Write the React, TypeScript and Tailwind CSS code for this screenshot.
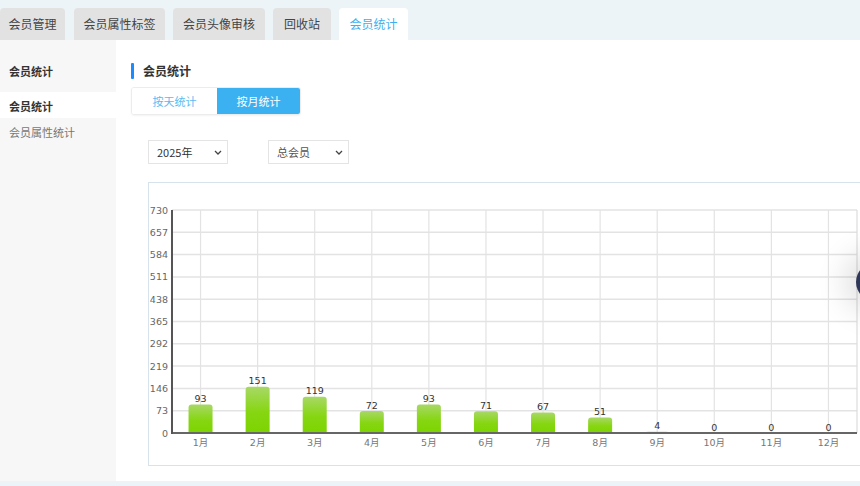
import React from 'react';

const tabs = [
  { title: '会员管理', w: 'w-[65px]' },
  { title: '会员属性标签', w: 'w-[91px]' },
  { title: '会员头像审核', w: 'w-[92px]' },
  { title: '回收站', w: 'w-[58px]' },
];

const months = [93, 151, 119, 72, 93, 71, 67, 51, 4, 0, 0, 0];

const X0 = 172;
const X1 = 857;
const Y0 = 433;
const YT = 210;
const MAX = 730;

const BarChart: React.FC = () => {
  const step = (X1 - X0) / 12;
  const unit = (Y0 - YT) / 10;
  return (
    <svg width="712" height="283" className="block">
      <defs>
        <linearGradient id="bar" x1="0" y1="0" x2="0" y2="1">
          <stop offset="0" stopColor="#a8d866" />
          <stop offset="0.55" stopColor="#86d611" />
          <stop offset="1" stopColor="#7cd400" />
        </linearGradient>
      </defs>
      <g transform="translate(-149,-183)" style={{ fontFamily: '"DejaVu Sans", Verdana, sans-serif' }}>
        {/* horizontal grid */}
        {Array.from({ length: 11 }).map((_, i) => (
          <line key={'h' + i} x1={X0} x2={X1} y1={Y0 - i * unit} y2={Y0 - i * unit} stroke="#e3e3e3" strokeWidth="1.5" />
        ))}
        {/* vertical grid */}
        {months.map((_, i) => (
          <line key={'v' + i} x1={X0 + (i + 0.5) * step} x2={X0 + (i + 0.5) * step} y1={YT} y2={Y0} stroke="#e3e3e3" strokeWidth="1.2" />
        ))}
        <line x1={X1} x2={X1} y1={YT} y2={Y0} stroke="#dcdcdc" strokeWidth="1.2" />
        {/* y labels */}
        {Array.from({ length: 11 }).map((_, i) => (
          <text key={'yl' + i} x={168} y={Y0 - i * unit + 3.5} textAnchor="end" fontSize="9.5" fill="#666">
            {i * 73}
          </text>
        ))}
        {/* bars */}
        {months.map((v, i) => {
          const h = (v / MAX) * (Y0 - YT);
          const cx = X0 + (i + 0.5) * step;
          return (
            <g key={'b' + i}>
              {v > 0 && (
                <path
                  d={`M${cx - 12} ${Y0} V${Y0 - h + Math.min(3, h)} Q${cx - 12} ${Y0 - h} ${cx - 9} ${Y0 - h} H${cx + 9} Q${cx + 12} ${Y0 - h} ${cx + 12} ${Y0 - h + Math.min(3, h)} V${Y0} Z`}
                  fill="url(#bar)"
                />
              )}
              <text x={cx} y={Y0 - h - 2.5} textAnchor="middle" fontSize="9.5" fill="#333">
                {v}
              </text>
              <text x={cx} y={446} textAnchor="middle" fontSize="9.5" fill="#777" style={{ fontFamily: '"DejaVu Sans", "Noto Sans CJK SC", sans-serif' }}>
                {i + 1}月
              </text>
            </g>
          );
        })}
        {/* axes */}
        <line x1={X0} x2={X1} y1={Y0} y2={Y0} stroke="#666" strokeWidth="2" />
        <line x1={X0} x2={X0} y1={YT} y2={Y0 + 1} stroke="#555" strokeWidth="2" />
      </g>
    </svg>
  );
};

const Chevron: React.FC = () => (
  <svg width="8" height="5" viewBox="0 0 8 5" className="block">
    <path d="M1 1l3 3L7 1" fill="none" stroke="#444" strokeWidth="1.3" />
  </svg>
);

const App: React.FC = () => {
  return (
    <div
      className="w-[860px] h-[486px] bg-[#edf4f8] overflow-hidden relative"
      style={{ fontFamily: '"Noto Sans CJK SC", "Liberation Sans", sans-serif' }}
    >
      {/* tabs */}
      <div className="h-[40px] pt-[8px] flex gap-[8px]">
        {tabs.map((t, i) => (
          <div
            key={t.title}
            className={`${t.w} ${i === 1 ? 'ml-[1px]' : ''} h-[32px] bg-[#e2e2e2] rounded-t-[4px] flex items-center justify-center text-[12px] text-[#444]`}
          >
            {t.title}
          </div>
        ))}
        <div className="w-[69px] h-[32px] bg-white rounded-t-[4px] flex items-center justify-center text-[12px] text-[#3cb0f0]">
          会员统计
        </div>
      </div>

      <div className="flex h-[441px]">
        {/* sidebar */}
        <div className="w-[116px] bg-[#f7f7f7]">
          <div className="h-[52px] flex items-center pt-[10px] pl-[9px] text-[11px] font-bold text-[#333]">会员统计</div>
          <div className="h-[26px] bg-white flex items-center pt-[2px] pl-[9px] text-[11px] font-bold text-[#333]">会员统计</div>
          <div className="h-[26px] flex items-center pt-[2px] pl-[9px] text-[11px] text-[#777]">会员属性统计</div>
        </div>

        {/* content */}
        <div className="flex-1 bg-white pl-[15px] pt-[23px] overflow-hidden">
          <div className="flex items-center h-[16px]">
            <div className="w-[3px] h-[16px] bg-[#1a8cff] rounded-[1px]" />
            <span className="ml-[9px] text-[12px] font-bold text-[#333]">会员统计</span>
          </div>

          <div className="mt-[8px] flex w-[170px] h-[28px] rounded-[3px] border border-[#ececec] shadow-[0_1px_2px_rgba(0,0,0,0.05)] overflow-hidden">
            <div className="w-[85px] flex items-center justify-center text-[11px] text-[#5bbcf2] bg-white">按天统计</div>
            <div className="flex-1 flex items-center justify-center text-[11px] text-white bg-[#3bb1f1]">按月统计</div>
          </div>

          <div className="mt-[25px] ml-[17px] flex gap-[40px]">
            <div className="w-[80px] h-[24px] border border-[#e4e4e4] flex items-center justify-between pl-[8px] pr-[5px] text-[11px] text-[#333]">
              <span>2025年</span>
              <Chevron />
            </div>
            <div className="w-[81px] h-[24px] border border-[#e4e4e4] flex items-center justify-between pl-[8px] pr-[5px] text-[11px] text-[#555]">
              <span>总会员</span>
              <Chevron />
            </div>
          </div>

          <div className="mt-[18px] ml-[17px] w-[730px] h-[284px] border border-[#d6e2ec]">
            <BarChart />
          </div>
        </div>
      </div>

      {/* floating button */}
      <div className="absolute left-[856px] top-[263px] w-[38px] h-[38px] rounded-full bg-[#2e3757] shadow-[0_0_30px_12px_rgba(0,0,0,0.12)]" />
    </div>
  );
};

export default App;
